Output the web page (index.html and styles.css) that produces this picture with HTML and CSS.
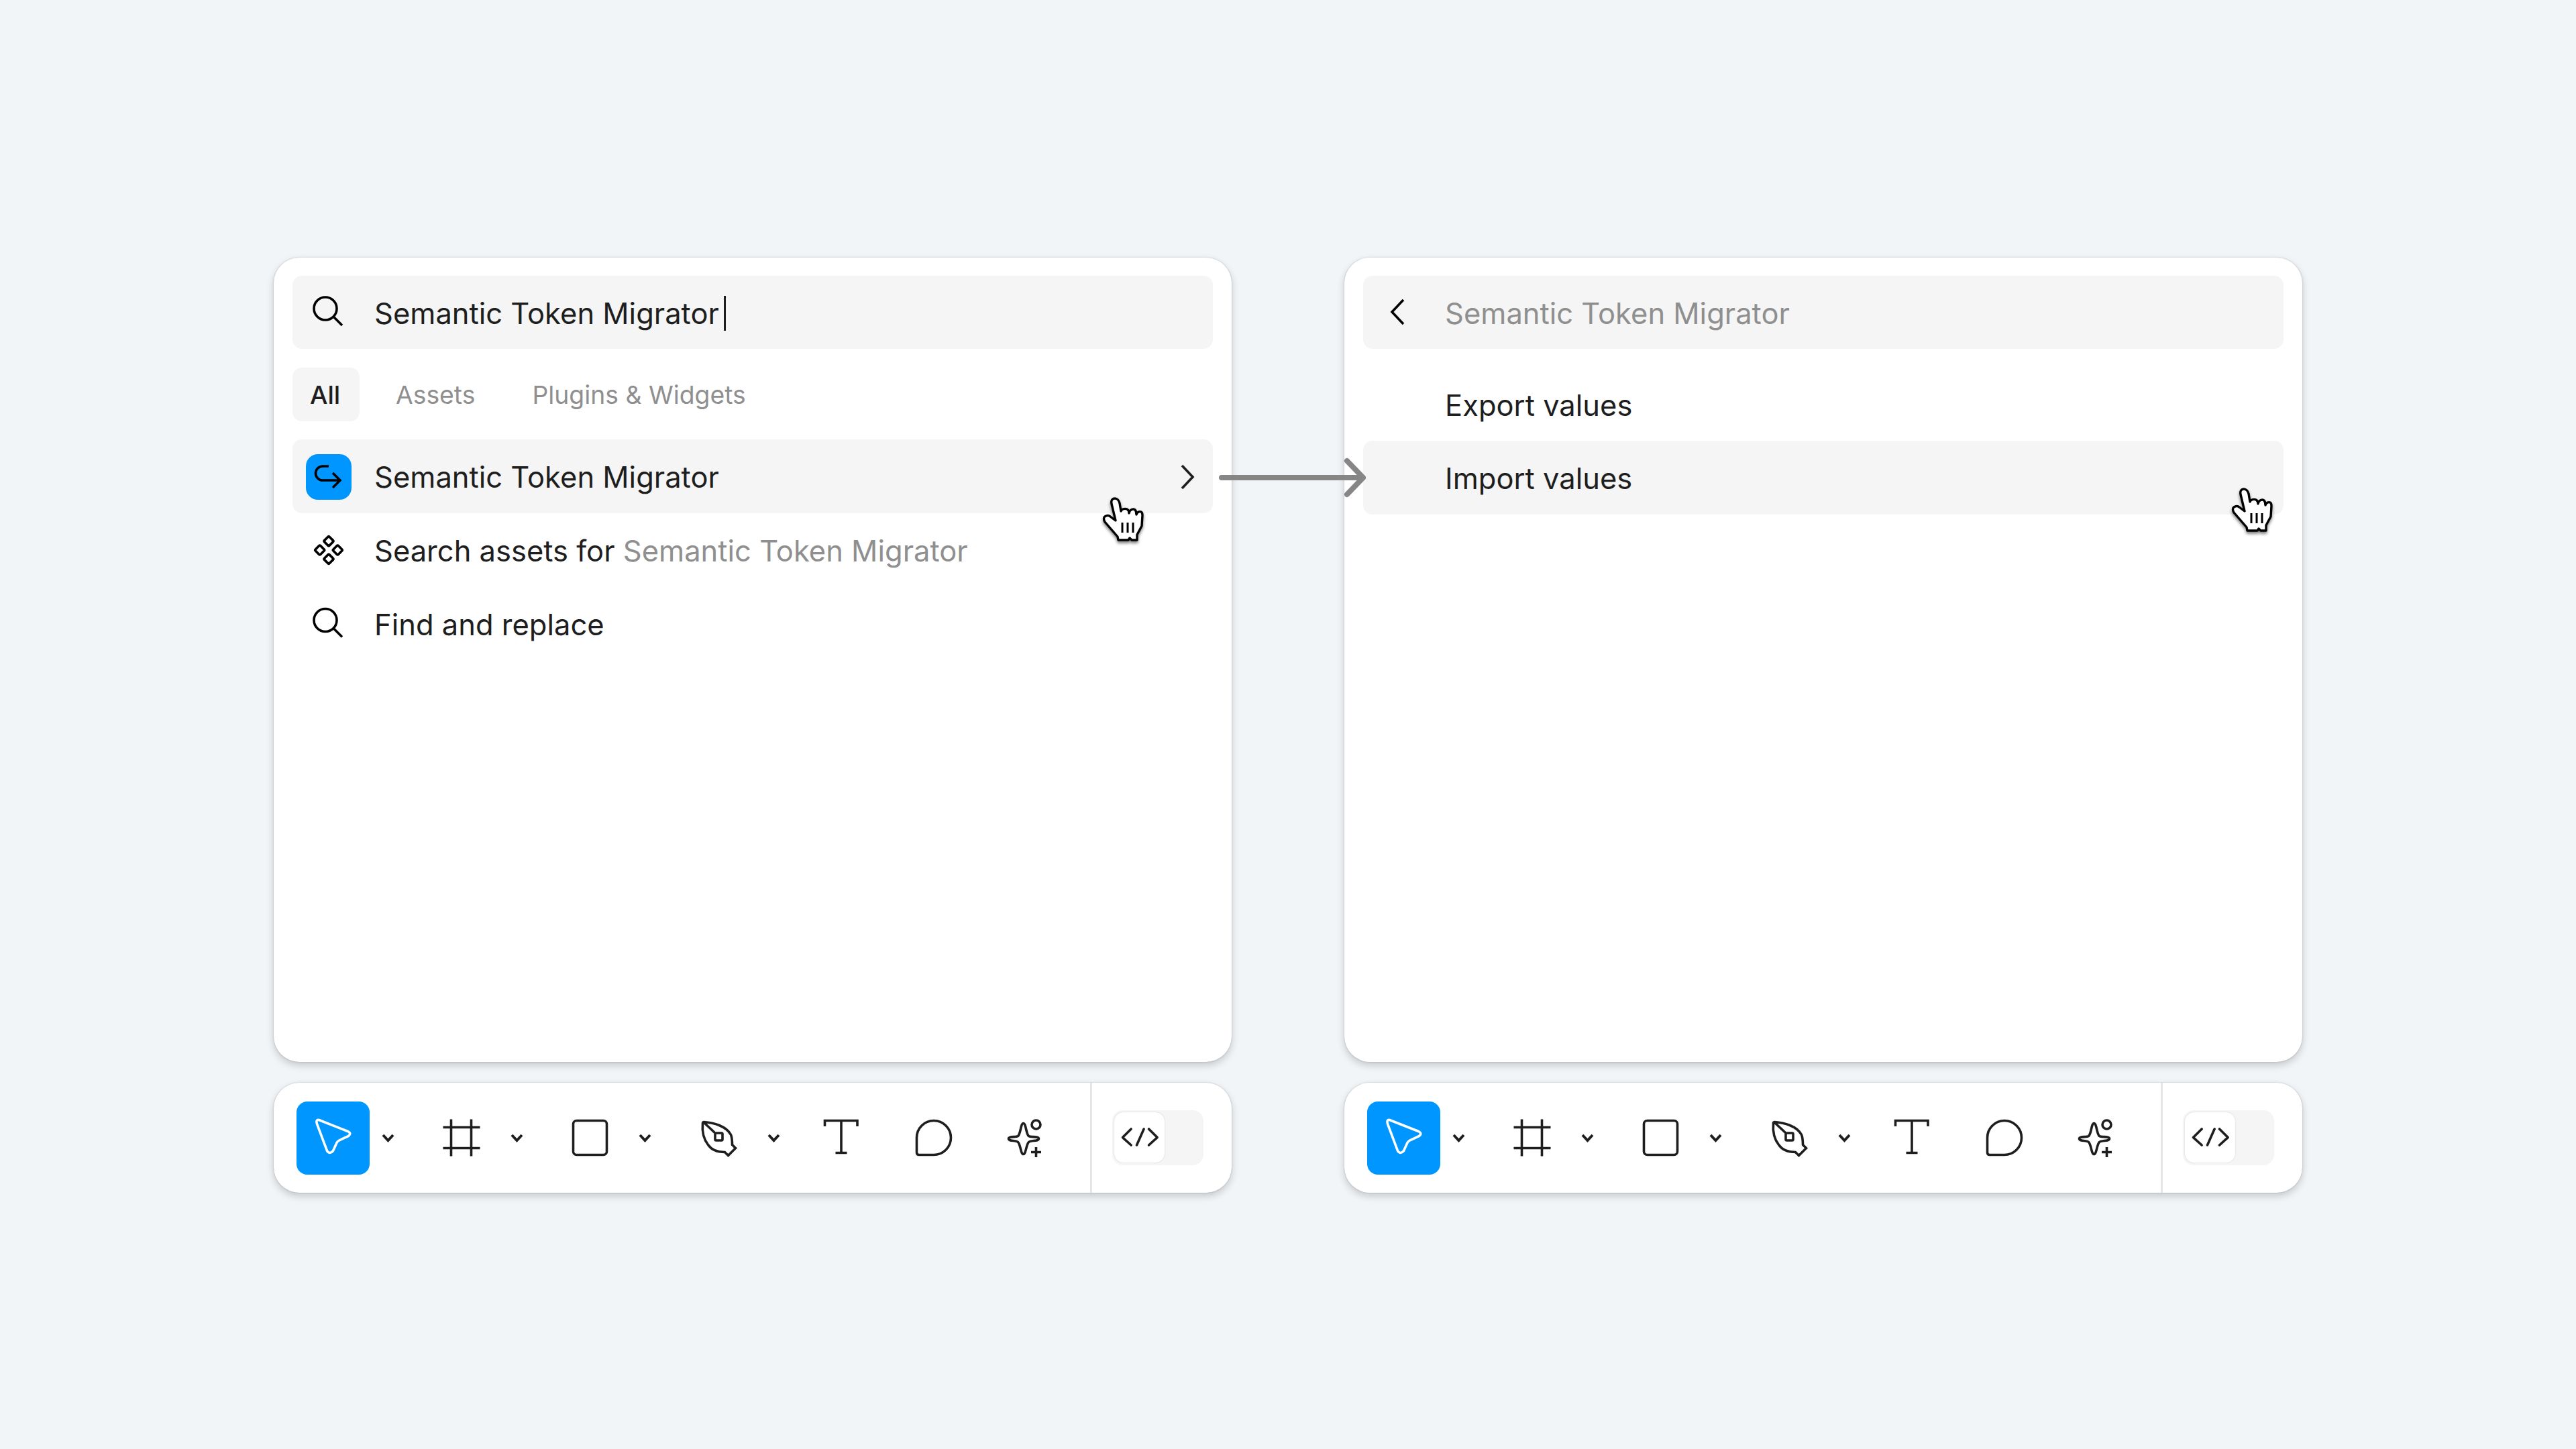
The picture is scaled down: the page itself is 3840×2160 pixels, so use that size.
FILE: index.html
```html
<!DOCTYPE html>
<html lang="en">
<head>
<meta charset="utf-8">
<title>Semantic Token Migrator</title>
<link rel="stylesheet" href="styles.css">
</head>
<body>
<main class="stage">
  <section class="column">
    <div class="card">
      <div class="field">
        <svg class="slot" viewBox="0 0 68 68"><circle cx="29" cy="27" r="17"/><path d="M42 40L54 52"/></svg>
        <span class="query">Semantic Token Migrator</span><span class="caret"></span>
      </div>
      <nav class="tabs">
        <span class="tab tab-active">All</span>
        <span class="tab">Assets</span>
        <span class="tab tab-plugins">Plugins &amp; Widgets</span>
      </nav>
      <div class="list">
        <div class="row row-hover">
          <span class="slot app-icon"><svg viewBox="0 0 68 68"><path d="M34 18H25A10.5 10.5 0 0 0 25 39H51M40 28L51 39L40 50"/></svg></span>
          <span>Semantic Token Migrator</span>
          <svg class="chevron" viewBox="0 0 20 38"><path d="M2 2L18 19L2 36"/></svg>
        </div>
        <div class="row">
          <svg class="slot" viewBox="0 0 68 68"><rect x="28.7" y="14.400" width="10.6" height="10.6" rx="1.5" transform="rotate(45 34 19.700)"/><rect x="28.7" y="41" width="10.6" height="10.6" rx="1.5" transform="rotate(45 34 46.300)"/><rect x="15.400" y="27.700" width="10.6" height="10.6" rx="1.5" transform="rotate(45 20.700 33)"/><rect x="42" y="27.700" width="10.6" height="10.6" rx="1.5" transform="rotate(45 47.300 33)"/></svg>
          <span>Search assets for <span class="muted">Semantic Token Migrator</span></span>
        </div>
        <div class="row">
          <svg class="slot" viewBox="0 0 68 68"><circle cx="29" cy="27.5" r="17"/><path d="M42 40.5L54 52.5"/></svg>
          <span>Find and replace</span>
        </div>
      </div>
      <svg class="hand hand-left" viewBox="-2 -2 64 72"><path d="M18 0C21 0 24 3 25 7L27 19C28 15 34 15 36 16C38 17 39 20 39 22C40 16 46 15 48 17C49 18 50 21 50 24C51 20 55 19 57 20C59 21 59 23 59 25L58 41L51 54V62H43L40 59L38 62H23L22 57L3 35C1 32 1 28 3 27C6 25 9 25 11 27L19 33L13 8C12 3 14 0 18 0Z"/><path class="lines" d="M29 36V51M37 36V51M45 36V51"/></svg>
    </div>
    <div class="toolbar">
      <span class="tool tool-active"><svg viewBox="-3.5 0.5 80 80"><path d="M15 14L58 31Q64 34 59 38L46 44Q42 46 41 49L36 60Q31 66 27 60L12 20Q10 13 15 14Z"/></svg></span>
      <svg class="drop" viewBox="0 0 55 16"><path d="M20 4L27.5 12L35 4"/></svg>
      <span class="tool tool-next"><svg viewBox="0 0 80 80"><path d="M24.5 12.5V67.5M54.5 12.5V67.5M12.5 24.5H67.5M12.5 55.5H67.5"/></svg></span>
      <svg class="drop" viewBox="0 0 55 16"><path d="M20 4L27.5 12L35 4"/></svg>
      <span class="tool tool-next"><svg viewBox="0 0 80 80"><rect x="14.5" y="14.5" width="50" height="51" rx="5"/></svg></span>
      <svg class="drop" viewBox="0 0 55 16"><path d="M20 4L27.5 12L35 4"/></svg>
      <span class="tool tool-next"><svg viewBox="0.5 0.5 80 80"><path d="M19 17C33 18 52 23 59 36C61 41 61 46 61 51L66 56L55 67L50 62C41 62 31 60 25 51C18 42 16 30 17 19C17 17 18 17 19 17ZM19 18L35 33"/><rect x="35.5" y="33.5" width="11" height="11" rx="1.5"/></svg></span>
      <svg class="drop" viewBox="0 0 55 16"><path d="M20 4L27.5 12L35 4"/></svg>
      <span class="tool tool-text"><svg viewBox="0 0 80 80"><path d="M15.5 23V14.5H64V23M40 14.5V62.5M31.5 62.5H48.5"/></svg></span>
      <span class="tool tool-comment"><svg viewBox="0 0 80 80"><path d="M40 14.5A25.5 25.5 0 1 1 40 65.5H18Q14.5 65.5 14.5 62V40A25.5 25.5 0 0 1 40 14.5Z"/></svg></span>
      <span class="tool tool-spark"><svg viewBox="-3.5 0.5 80 80"><path d="M35 19C39 19 39 35 43 38C46 40 58 38 58 42C58 46 46 44 43 47C39 51 39 65 35 65C31 65 31 51 27 47C24 44 13 46 13 42C13 38 24 40 27 38C31 35 31 19 35 19Z"/><circle cx="54" cy="21" r="6.5"/><path d="M54 54.500V69.500M46.500 62H61.500"/></svg></span>
      <span class="divider"></span>
      <span class="toggle"><span class="thumb"><svg viewBox="-1.500 0 75 75"><path d="M23.600 25L11 37.600L23.600 49M42.600 25L32 49M50 25L62.600 37.600L50 49"/></svg></span></span>
    </div>
  </section>

  <section class="column">
    <div class="card">
      <div class="field field-back">
        <svg class="slot chevron-back" viewBox="0 0 68 68"><path d="M40 14L23 32L40 50"/></svg>
        <span class="muted">Semantic Token Migrator</span>
      </div>
      <div class="list list-back">
        <div class="row row-export"><span class="slot"></span><span>Export values</span></div>
        <div class="row row-hover"><span class="slot"></span><span>Import values</span></div>
      </div>
      <svg class="hand hand-right" viewBox="-2 -2 64 72"><path d="M18 0C21 0 24 3 25 7L27 19C28 15 34 15 36 16C38 17 39 20 39 22C40 16 46 15 48 17C49 18 50 21 50 24C51 20 55 19 57 20C59 21 59 23 59 25L58 41L51 54V62H43L40 59L38 62H23L22 57L3 35C1 32 1 28 3 27C6 25 9 25 11 27L19 33L13 8C12 3 14 0 18 0Z"/><path class="lines" d="M29 36V51M37 36V51M45 36V51"/></svg>
    </div>
    <div class="toolbar">
      <span class="tool tool-active"><svg viewBox="-3.5 0.5 80 80"><path d="M15 14L58 31Q64 34 59 38L46 44Q42 46 41 49L36 60Q31 66 27 60L12 20Q10 13 15 14Z"/></svg></span>
      <svg class="drop" viewBox="0 0 55 16"><path d="M20 4L27.5 12L35 4"/></svg>
      <span class="tool tool-next"><svg viewBox="0 0 80 80"><path d="M24.5 12.5V67.5M54.5 12.5V67.5M12.5 24.5H67.5M12.5 55.5H67.5"/></svg></span>
      <svg class="drop" viewBox="0 0 55 16"><path d="M20 4L27.5 12L35 4"/></svg>
      <span class="tool tool-next"><svg viewBox="0 0 80 80"><rect x="14.5" y="14.5" width="50" height="51" rx="5"/></svg></span>
      <svg class="drop" viewBox="0 0 55 16"><path d="M20 4L27.5 12L35 4"/></svg>
      <span class="tool tool-next"><svg viewBox="0.5 0.5 80 80"><path d="M19 17C33 18 52 23 59 36C61 41 61 46 61 51L66 56L55 67L50 62C41 62 31 60 25 51C18 42 16 30 17 19C17 17 18 17 19 17ZM19 18L35 33"/><rect x="35.5" y="33.5" width="11" height="11" rx="1.5"/></svg></span>
      <svg class="drop" viewBox="0 0 55 16"><path d="M20 4L27.5 12L35 4"/></svg>
      <span class="tool tool-text"><svg viewBox="0 0 80 80"><path d="M15.5 23V14.5H64V23M40 14.5V62.5M31.5 62.5H48.5"/></svg></span>
      <span class="tool tool-comment"><svg viewBox="0 0 80 80"><path d="M40 14.5A25.5 25.5 0 1 1 40 65.5H18Q14.5 65.5 14.5 62V40A25.5 25.5 0 0 1 40 14.5Z"/></svg></span>
      <span class="tool tool-spark"><svg viewBox="-3.5 0.5 80 80"><path d="M35 19C39 19 39 35 43 38C46 40 58 38 58 42C58 46 46 44 43 47C39 51 39 65 35 65C31 65 31 51 27 47C24 44 13 46 13 42C13 38 24 40 27 38C31 35 31 19 35 19Z"/><circle cx="54" cy="21" r="6.5"/><path d="M54 54.500V69.500M46.500 62H61.500"/></svg></span>
      <span class="divider"></span>
      <span class="toggle"><span class="thumb"><svg viewBox="-1.500 0 75 75"><path d="M23.600 25L11 37.600L23.600 49M42.600 25L32 49M50 25L62.600 37.600L50 49"/></svg></span></span>
    </div>
  </section>

  <svg class="flow-arrow" viewBox="0 0 230 70"><path d="M4 35H215M191 10L215 35L191 60"/></svg>
</main>
</body>
</html>
```

FILE: styles.css
```css
* { box-sizing: border-box; }

html, body {
  margin: 0;
  height: 100%;
}

body {
  background: #f2f5f8;
  color: #1e1e1e;
  font-family: "Inter", "Liberation Sans", sans-serif;
  font-size: 43.5px;
}

.stage {
  position: relative;
  width: 3840px;
  height: 2160px;
  padding-top: 384px;
  display: flex;
  justify-content: center;
  gap: 168px;
}

.column {
  width: 1428px;
  display: flex;
  flex-direction: column;
  gap: 31px;
}

.card {
  position: relative;
  height: 1199px;
  padding: 27px 28px 0;
  background: #fff;
  border-radius: 38px;
  box-shadow: 0 0 2px rgba(0, 0, 0, .25), 0 5px 12px rgba(0, 0, 0, .19);
}

.slot {
  flex: none;
  width: 68px;
  height: 68px;
  margin-right: 34px;
}

svg { display: block; overflow: visible; }

svg path, svg circle, svg rect {
  fill: none;
  stroke: #1e1e1e;
  stroke-width: 3.6;
}

.field {
  height: 109px;
  display: flex;
  align-items: center;
  padding: 3px 0 0 20px;
  background: #f5f5f5;
  border-radius: 14px;
}

.field .slot circle, .field .slot path,
.row .slot circle, .row .slot path, .row .slot rect { stroke: #000; }

.caret {
  width: 3px;
  height: 52px;
  margin-left: 7px;
  background: #1e1e1e;
}

.tabs {
  display: flex;
  gap: 26px;
  margin-top: 28px;
  font-size: 37.3px;
  color: #8f8f8f;
}

.tab {
  height: 80px;
  padding: 0 28px;
  display: flex;
  align-items: center;
  border-radius: 14px;
}

.tab-active {
  width: 100px;
  padding: 0 0 0 26px;
  background: #f5f5f5;
  color: #1e1e1e;
  font-weight: 500;
}

.tab-plugins { margin-left: 3px; }

.list { margin-top: 27px; }
.list-back { margin-top: 27px; }

.row {
  height: 110px;
  display: flex;
  align-items: center;
  padding: 1px 0 0 20px;
  border-radius: 14px;
}

.row-hover { background: #f5f5f5; }

.row-export { padding-top: 3px; }

.muted { color: #8f8f8f; }

.app-icon {
  background: #0096ff;
  border-radius: 18px;
}

.app-icon path { stroke: #fff; }

.chevron {
  width: 20px;
  height: 38px;
  margin-left: auto;
  margin-right: 28px;
}

.hand {
  position: absolute;
  width: 64px;
  height: 72px;
  filter: drop-shadow(0 3px 2px rgba(0, 0, 0, .5));
}

.hand path { fill: #fff; stroke: #000; stroke-width: 3.4; stroke-linejoin: round; }
.hand .lines { fill: none; stroke-width: 3; }

.hand-left { left: 1234px; top: 357px; }
.hand-right { left: 1321px; top: 343px; }

.toolbar {
  height: 164px;
  display: flex;
  align-items: center;
  padding-left: 34px;
  background: #fff;
  border-radius: 38px;
  box-shadow: 0 0 2px rgba(0, 0, 0, .25), 0 5px 12px rgba(0, 0, 0, .19);
}

.tool {
  flex: none;
  width: 109px;
  height: 109px;
  display: flex;
  align-items: center;
  justify-content: center;
  border-radius: 16px;
}

.tool svg { width: 80px; height: 80px; }

.tool-active { background: #0096ff; }
.tool-active path { stroke: #fff; }

.tool-next { margin-left: 27.5px; }
.tool-text { margin-left: 19px; }
.tool-comment { margin-left: 29px; }
.tool-spark { margin-left: 26px; }

.drop { flex: none; width: 55px; height: 16px; }
.drop path { stroke-width: 4; }

.divider {
  align-self: stretch;
  width: 3px;
  margin-left: 43px;
  background: #e6e6e6;
}

.toggle {
  width: 136px;
  height: 82px;
  margin-left: 30px;
  padding: 3px;
  background: #f5f5f5;
  border-radius: 16px;
}

.thumb {
  display: block;
  width: 75px;
  height: 75px;
  background: #fff;
  border-radius: 14px;
  box-shadow: 0 0 2px rgba(0, 0, 0, .18);
}

.thumb svg { width: 75px; height: 75px; }
.thumb path { stroke-linecap: round; stroke-linejoin: round; }

.flow-arrow {
  position: absolute;
  left: 1817px;
  top: 677px;
  width: 230px;
  height: 70px;
}

.flow-arrow path {
  stroke: #868686;
  stroke-width: 8;
  stroke-linecap: round;
  stroke-linejoin: round;
}
```
